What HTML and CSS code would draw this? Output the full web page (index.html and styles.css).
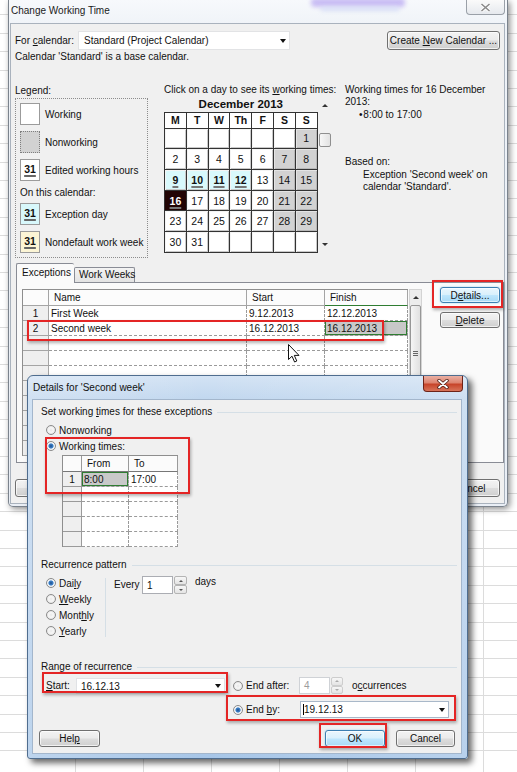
FILE: index.html
```html
<!DOCTYPE html>
<html>
<head>
<meta charset="utf-8">
<title>Change Working Time</title>
<link rel="stylesheet" href="styles.css">
</head>
<body>
<div class="desk">

  <div class="win main">
    <div class="blob b1"></div>
    <div class="blob b2"></div>
    <div class="tbar">
      <span class="ttl">Change Working Time</span>
      <div class="xb xb-in">
        <svg width="11" height="9" viewBox="0 0 11 9"><path d="M1.5 1 L9.5 8 M9.5 1 L1.5 8" stroke="#fff" stroke-width="3.2"/><path d="M1.5 1 L9.5 8 M9.5 1 L1.5 8" stroke="#8a8a8a" stroke-width="1.6"/></svg>
      </div>
    </div>
    <div class="client mc">
      <div class="row1">
        <span class="lbl1">For <u>c</u>alendar:</span>
        <div class="dd dd-cal"><span>Standard (Project Calendar)</span><i class="tri"></i></div>
        <div class="btn b-new"><span>Create <u>N</u>ew Calendar ...</span></div>
      </div>
      <div class="note">Calendar 'Standard' is a base calendar.</div>

      <div class="cols">
        <div class="lgc">
          <div class="cap">Legend:</div>
          <div class="lgbox">
            <div class="li"><span class="sw sw-w"></span><span>Working</span></div>
            <div class="li"><span class="sw sw-n"></span><span>Nonworking</span></div>
            <div class="li"><span class="sw sw-e"><b>31</b></span><span>Edited working hours</span></div>
            <div class="oncal">On this calendar:</div>
            <div class="li"><span class="sw sw-x"><b>31</b></span><span>Exception day</span></div>
            <div class="li"><span class="sw sw-d"><b>31</b></span><span>Nondefault work week</span></div>
          </div>
        </div>

        <div class="calc">
          <div class="cap2">Click on a day to see its <u>w</u>orking times:</div>
          <div class="calbody">
            <div class="calmain">
              <div class="month">December 2013</div>
              <div class="cal">
                <div class="h">M</div><div class="h">T</div><div class="h">W</div><div class="h">Th</div><div class="h">F</div><div class="h">S</div><div class="h">S</div>
                <div></div><div></div><div></div><div></div><div></div><div></div><div class="g">1</div>
                <div>2</div><div>3</div><div>4</div><div>5</div><div>6</div><div class="g">7</div><div class="g">8</div>
                <div class="x"><span>9</span></div><div class="x"><span>10</span></div><div class="x"><span>11</span></div><div class="x"><span>12</span></div><div>13</div><div class="g">14</div><div class="g">15</div>
                <div class="s"><span>16</span></div><div>17</div><div>18</div><div>19</div><div>20</div><div class="g">21</div><div class="g">22</div>
                <div>23</div><div>24</div><div>25</div><div>26</div><div>27</div><div class="g">28</div><div class="g">29</div>
                <div>30</div><div>31</div><div></div><div></div><div></div><div></div><div></div>
              </div>
            </div>
            <div class="csb"><i class="up"></i><div class="cthumb"></div><i class="dn"></i></div>
          </div>
        </div>

        <div class="info">
          <div>Working times for 16 December</div>
          <div>2013:</div>
          <div class="i3">&#8226;&#8202;8:00 to 17:00</div>
          <div class="i4">Based on:</div>
          <div class="i5">Exception 'Second week' on</div>
          <div class="i6">calendar 'Standard'.</div>
        </div>
      </div>

      <div class="tabs">
        <div class="tab act">Exceptions</div>
        <div class="tab">Work Weeks</div>
      </div>
      <div class="panel">
        <div class="xtw">
          <div class="xt">
            <div class="hc rh0"></div><div class="hc">Name</div><div class="hc">Start</div><div class="hc hg">Finish</div>
            <div class="rh">1</div><div class="bc">First Week</div><div class="bc">9.12.2013</div><div class="bc">12.12.2013</div>
            <div class="rh">2</div><div class="bc">Second week</div><div class="bc">16.12.2013</div><div class="bc fsel">16.12.2013</div>
            <div class="rh"></div><div class="bc"></div><div class="bc"></div><div class="bc"></div>
            <div class="rh"></div><div class="bc"></div><div class="bc"></div><div class="bc"></div>
            <div class="rh"></div><div class="bc"></div><div class="bc"></div><div class="bc"></div>
            <div class="rh"></div><div class="bc"></div><div class="bc"></div><div class="bc"></div>
            <div class="rh"></div><div class="bc"></div><div class="bc"></div><div class="bc"></div>
            <div class="rh"></div><div class="bc"></div><div class="bc"></div><div class="bc"></div>
            <div class="rh"></div><div class="bc"></div><div class="bc"></div><div class="bc"></div>
            <div class="rh"></div><div class="bc"></div><div class="bc"></div><div class="bc"></div>
          </div>
          <div class="vsb">
            <div class="vup"><i class="up"></i></div>
            <div class="vthumb"><span class="grip"></span><span class="grip"></span><span class="grip"></span></div>
          </div>
        </div>
        <div class="sbtn">
          <div class="btn def b-det"><span>D<u>e</u>tails...</span></div>
          <div class="btn b-del"><span><u>D</u>elete</span></div>
        </div>
      </div>
      <div class="bbtns">
        <div class="btn b-h1"><span>Help</span></div>
        <div class="btn b-ok1"><span>OK</span></div>
        <div class="btn b-c1"><span>Cancel</span></div>
      </div>
    </div>
  </div>

  <div class="ann r1"></div>
  <div class="ann r2"></div>

  <svg class="cursor" width="13" height="19" viewBox="0 0 13 19"><path d="M0.5 0.5 L0.5 15.5 L4 12.2 L6.6 18 L8.8 17 L6.3 11.4 L11 11.4 Z" fill="#fff" stroke="#111" stroke-width="1" stroke-linejoin="round"/></svg>

  <div class="win det">
    <div class="dtbar">
      <span class="dttl">Details for 'Second week'</span>
      <div class="xb xb-red">
        <svg width="12" height="10" viewBox="0 0 12 10"><path d="M2 1.5 L10 8.5 M10 1.5 L2 8.5" stroke="#4a1a12" stroke-width="3.4" stroke-linecap="round"/><path d="M2 1.5 L10 8.5 M10 1.5 L2 8.5" stroke="#fff" stroke-width="1.8" stroke-linecap="round"/></svg>
      </div>
    </div>
    <div class="client dc">
      <div class="gh g1"><span>Set working <u>t</u>imes for these exceptions</span></div>
      <div class="rr r-non"><span class="radio"></span><span>Nonworking</span></div>
      <div class="rr r-wt"><span class="radio on"></span><span>Working times:</span></div>
      <div class="wt">
        <div class="whc"></div><div class="whc">From</div><div class="whc">To</div>
        <div class="wrh">1</div><div class="wbc wsel">8:00</div><div class="wbc">17:00</div>
        <div class="wrh"></div><div class="wbc"></div><div class="wbc"></div>
        <div class="wrh"></div><div class="wbc"></div><div class="wbc"></div>
        <div class="wrh"></div><div class="wbc"></div><div class="wbc"></div>
        <div class="wrh"></div><div class="wbc"></div><div class="wbc"></div>
      </div>

      <div class="gh g2"><span>Recurrence pattern</span></div>
      <div class="rec">
        <div class="recl">
          <div class="rr rr16"><span class="radio on"></span><span>Dai<u>l</u>y</span></div>
          <div class="rr rr16"><span class="radio"></span><span><u>W</u>eekly</span></div>
          <div class="rr rr16"><span class="radio"></span><span>Mont<u>h</u>ly</span></div>
          <div class="rr rr16"><span class="radio"></span><span><u>Y</u>early</span></div>
        </div>
        <div class="vsep"></div>
        <div class="recr">
          <span class="every">Every</span>
          <div class="inp inp1">1</div>
          <div class="spin"><span class="sp"><i class="up sm"></i></span><span class="sp"><i class="dn sm"></i></span></div>
          <span class="days">days</span>
        </div>
      </div>

      <div class="gh g3"><span>Range of recurrence</span></div>
      <div class="rg1">
        <span class="lstart"><u>S</u>tart:</span>
        <div class="dd dd-st"><span>16.12.13</span><i class="tri"></i></div>
        <span class="radio rad2"></span>
        <span class="lea">End after:</span>
        <div class="inp inp2">4</div>
        <div class="spin spin2"><span class="sp"><i class="up sm gr"></i></span><span class="sp"><i class="dn sm gr"></i></span></div>
        <span class="occ">o<u>c</u>currences</span>
      </div>
      <div class="rg2">
        <span class="radio on rad2"></span>
        <span class="leb">End <u>b</u>y:</span>
        <div class="dd dd-eb"><span class="caret"></span><span>19.12.13</span><i class="tri"></i></div>
      </div>
      <div class="dbtns">
        <div class="btn b-help"><span>Hel<u>p</u></span></div>
        <div class="btn def b-ok"><span>OK</span></div>
        <div class="btn b-cancel"><span>Cancel</span></div>
      </div>
    </div>
  </div>

  <div class="ann r3"></div>
  <div class="ann r4"></div>
  <div class="ann r5"></div>
  <div class="ann r6"></div>
</div>
</body>
</html>
```

FILE: styles.css
```css
* { box-sizing: border-box; }
html, body { margin: 0; padding: 0; }
body {
  font-family: "Liberation Sans", Arial, sans-serif;
  font-size: 10px;
  color: #111;
  background: #fff;
}
u { text-decoration: underline; text-underline-offset: 1px; }

.desk {
  position: relative;
  width: 517px;
  height: 772px;
  overflow: hidden;
  background-color: #fff;
  background-image:
    repeating-linear-gradient(to bottom, transparent 0, transparent 17.4px, #dcdcdc 17.4px, #dcdcdc 18.4px),
    repeating-linear-gradient(to right, transparent 0, transparent 67px, #dcdcdc 67px, #dcdcdc 68px);
  background-position: 0 -3px, 8px 0;
}

/* ---------- windows ---------- */
.win { position: absolute; display: flex; flex-direction: column; }

.main {
  left: 8px; top: 0;
  width: 500px; height: 507px;
  background: linear-gradient(#f7f9fc, #eef2f7 30px, #e9eef5);
  border: 1px solid #7b838d;
  border-top: none;
  border-radius: 0 0 5px 5px;
  padding: 0 2px 2px 1px;
  box-shadow: 2px 2px 6px rgba(0,0,0,.45);
  z-index: 1;
}
.blob { position: absolute; filter: blur(2px); }
.b1 { left: 302px; top: -2px; width: 94px; height: 9px; background: #c9bdf4; border-radius: 4px; }
.b2 { left: 312px; top: 7px; width: 78px; height: 4px; background: #d6def6; }

.tbar { height: 23px; display: flex; align-items: flex-start; position: relative; }
.ttl { line-height: 22px; padding-left: 1px; color: #1a1a1a; }
.xb { display: flex; align-items: center; justify-content: center; margin-left: auto; }
.xb-in {
  width: 39px; height: 15px;
  border: 1px solid #9aa0a8; border-top: none;
  border-radius: 0 0 4px 4px;
  background: linear-gradient(#fafafa, #e6e9ee);
  margin-right: 0;
}

.client { flex: 1; background: #f0f0f0; display: flex; flex-direction: column; }
.mc { border: 1px solid #a9b2bd; padding: 0 4px; }

.row1 { display: flex; align-items: center; height: 19px; margin-top: 7px; }
.lbl1 { width: 63px; white-space: nowrap; }
.dd {
  background: #fff;
  border: 1px solid #c9ccd1;
  display: flex; align-items: center;
  padding-left: 5px;
  white-space: nowrap;
}
.dd-cal { width: 212px; height: 19px; border-color: #e2e3e5; }
.tri {
  margin-left: auto; margin-right: 3px;
  width: 0; height: 0;
  border-left: 3.5px solid transparent;
  border-right: 3.5px solid transparent;
  border-top: 4px solid #111;
}

.btn {
  border: 1px solid #707070;
  border-radius: 3px;
  background: linear-gradient(#f3f3f3 0, #ebebeb 48%, #dddddd 52%, #cfcfcf 100%);
  box-shadow: inset 0 0 0 1px rgba(255,255,255,.7);
  display: flex; align-items: center; justify-content: center;
  white-space: nowrap;
  color: #111;
}
.btn.def {
  border-color: #3c7fb1;
  background: linear-gradient(#eaf6fd 0, #d9f0fc 48%, #bee6fd 52%, #a7d9f5 100%);
  box-shadow: inset 0 0 0 1px rgba(255,255,255,.6), 0 0 2px #8ecdf0;
}
.b-new { margin-left: auto; width: 113px; height: 19px; }

.note { margin-top: 1px; line-height: 12px; }

.cols { display: flex; margin-top: 21px; }

/* legend */
.lgc { width: 133px; flex: none; }
.cap { line-height: 14px; height: 14px; }
.lgbox {
  height: 160px;
  border: 1px dotted #8c8c8c;
  padding: 4px 0 0 4px;
}
.li { display: flex; align-items: center; height: 22px; margin-bottom: 6px; white-space: nowrap; }
.sw {
  width: 20px; height: 22px; flex: none;
  margin-right: 5px;
  border: 1px solid #9b9b9b;
  background: #fff;
  display: flex; align-items: center; justify-content: center;
}
.sw b {
  font-size: 10.5px;
  text-decoration: underline;
  text-decoration-thickness: 2px;
  text-decoration-color: #666;
  text-underline-offset: 2px;
  margin-top: -2px;
}
.sw-n { background: #d2d2d2; border: 1px dotted #7e7e7e; }
.sw-x { background: #d8f8fb; }
.sw-d { background: #fcf5d5; }
.oncal { line-height: 14px; margin: -1px 0 3px 0; }

/* calendar */
.calc { margin-left: 16px; width: 166px; flex: none; }
.cap2 { line-height: 12px; height: 12px; white-space: nowrap; }
.calbody { display: flex; }
.month { height: 16px; line-height: 16px; text-align: center; font-weight: bold; font-size: 11.5px; }
.cal {
  display: grid;
  grid-template-columns: repeat(7, 20.8px);
  grid-template-rows: 14.6px repeat(6, 19.7px);
  gap: 1px;
  background: #333;
  border: 1px solid #333;
  width: max-content;
}
.cal > div {
  background: #fff;
  display: flex; align-items: center; justify-content: center;
  font-size: 10.5px;
  box-shadow: inset 1px 1px 0 #f4f4f4, inset -1px -1px 0 #c9c9c9;
}
.cal .h { font-weight: bold; box-shadow: none; }
.cal .g { background: #d2d2d2; box-shadow: inset 1px 1px 0 #e4e4e4, inset -1px -1px 0 #b7b7b7; }
.cal .x { background: #d9f9fc; font-weight: bold; }
.cal .s { background: #220404; color: #fff; font-weight: bold; box-shadow: none; }
.cal .x span, .cal .s span {
  text-decoration: underline;
  text-decoration-thickness: 2px;
  text-decoration-color: #777;
  text-underline-offset: 2px;
}
.csb {
  width: 12px; height: 154px;
  margin-top: 2px; margin-left: 1px;
  display: flex; flex-direction: column; align-items: center;
}
.up, .dn { display: block; width: 0; height: 0; }
.up { border-left: 3px solid transparent; border-right: 3px solid transparent; border-bottom: 3px solid #333; }
.dn { border-left: 3px solid transparent; border-right: 3px solid transparent; border-top: 3px solid #333; }
.csb .up { margin-top: 6px; }
.cthumb {
  margin-top: 26px;
  width: 12px; height: 14px;
  border: 1px solid #8f8f8f;
  border-radius: 2px;
  background: linear-gradient(to right, #f7f7f7, #e2e2e2);
}
.csb .dn { margin-top: auto; margin-bottom: 6px; }

/* info */
.info { margin-left: 15px; line-height: 12px; white-space: nowrap; }
.i3 { margin-top: 1px; padding-left: 14px; }
.i4 { margin-top: 35px; }
.i5 { margin-top: 1px; padding-left: 18px; }
.i6 { padding-left: 18px; }

/* tabs */
.tabs { display: flex; align-items: flex-end; margin-top: 5px; margin-left: 1px; height: 19px; position: relative; z-index: 1; }
.tab {
  height: 15px; width: 61px;
  border: 1px solid #898c95; border-bottom: none;
  border-radius: 2px 2px 0 0;
  padding-left: 4px;
  line-height: 14px;
  background: linear-gradient(#f3f3f3, #e3e3e3);
  white-space: nowrap;
}
.tab.act {
  height: 20px; width: 58px;
  margin-bottom: -1px;
  padding-left: 5px;
  line-height: 18px;
  background: #fafafa;
  border-right: none;
}
.panel {
  margin-left: 1px;
  width: 488px; height: 181px;
  border: 1px solid #898c95;
  background: #fafafa;
  display: flex; align-items: flex-start;
}
.xtw { display: flex; margin: 6px 0 0 5px; }
.xt {
  display: grid;
  grid-template-columns: 26px 198px 78px 83px;
  grid-template-rows: 16px;
  grid-auto-rows: 15px;
  border-top: 1px solid #8e8e8e;
  border-left: 1px solid #8e8e8e;
  background: #fff;
}
.xt > div { white-space: nowrap; overflow: hidden; display: flex; align-items: center; }
.hc { background: #fcfcfc; border-right: 1px solid #a5a5a5; border-bottom: 1px solid #a5a5a5; padding-left: 5px; }
.hc.hg { border-bottom: 1px solid #2f7d32; }
.rh { background: #efefef; border-right: 1px solid #a5a5a5; border-bottom: 1px solid #a5a5a5; justify-content: center; }
.bc { border-right: 1px dashed #9a9a9a; border-bottom: 1px dashed #9a9a9a; padding-left: 2px; }
.bc.fsel { background: #c8c8c8; box-shadow: inset 0 0 0 1px #2f7d32; }
.vsb {
  width: 13px; height: 167px;
  margin-left: 1px;
  background: #ececec;
  border: 1px solid #d3d3d3;
  display: flex; flex-direction: column; align-items: center;
}
.vup { height: 15px; display: flex; align-items: center; justify-content: center; }
.vthumb {
  width: 11px; height: 96px;
  border: 1px solid #979797;
  border-radius: 2px;
  background: linear-gradient(to right, #f5f5f5, #e0e0e0);
  display: flex; flex-direction: column; align-items: center; justify-content: center; gap: 1px;
}
.grip { display: block; width: 5px; height: 1px; background: #666; }
.sbtn { margin-left: 18px; margin-top: 4px; display: flex; flex-direction: column; gap: 9px; }
.b-det, .b-del { width: 60px; height: 16px; }

.bbtns { display: flex; margin-top: 16px; height: 18px; }
.b-h1 { width: 60px; }
.b-ok1 { width: 60px; margin-left: auto; }
.b-c1 { width: 60px; margin-left: 12px; }

/* ---------- details dialog ---------- */
.det {
  left: 27px; top: 375px;
  width: 441px; height: 384px;
  border: 1px solid #4f6d8f;
  border-radius: 6px 6px 3px 3px;
  background: linear-gradient(to right, rgba(255,255,255,.25), rgba(255,255,255,0) 40%, rgba(255,255,255,.2)), linear-gradient(#d3e3f4, #c2d8ef 22px, #b2cdeb 60%, #a7c6e8);
  padding: 0 5px 4px 4px;
  box-shadow: 4px 4px 6px rgba(0,0,0,.6);
  z-index: 3;
}
.dtbar { height: 23px; display: flex; align-items: flex-start; }
.dttl { line-height: 23px; padding-left: 1px; color: #111; }
.xb-red {
  width: 40px; height: 16px;
  margin-right: -1px;
  border: 1px solid #6d2318; border-top: none;
  border-radius: 0 0 4px 4px;
  background: linear-gradient(#eab0a3 0, #dd8470 45%, #c7442a 55%, #d8745a 100%);
}
.dc { border: 1px solid #a3b6cc; padding: 0 4px 0 8px; }

.gh { display: flex; align-items: center; line-height: 12px; height: 12px; white-space: nowrap; }
.gh::after { content: ""; flex: 1; height: 1px; background: #d5dfe6; margin-left: 5px; }
.g1 { margin-top: 6px; }
.g2 { margin-top: 12px; }
.g3 { margin-top: 22px; }

.rr { display: flex; align-items: center; height: 14px; padding-left: 5px; white-space: nowrap; }
.r-non { margin-top: 5px; }
.r-wt { margin-top: 2px; }
.rr16 { height: 16px; }
.radio {
  display: block; flex: none;
  width: 10px; height: 10px;
  margin-right: 3px;
  border-radius: 50%;
  border: 1px solid #8b8b8b;
  background: radial-gradient(circle at 50% 50%, #e8e8e8 0, #f7f7f7 40%, #d6d6d6 100%);
}
.radio.on { background: radial-gradient(circle at 50% 50%, #1d4d8c 0, #3f86cf 2.2px, #e3eaf2 2.9px, #f4f6f8 60%, #d3d8de 100%); }

.wt {
  display: grid;
  grid-template-columns: 19px 47px 49px;
  grid-template-rows: 16px repeat(5, 15px);
  margin: 2px 0 0 21px;
  width: max-content;
  border-top: 1px solid #8e8e8e;
  border-left: 1px solid #8e8e8e;
  background: #fff;
}
.wt > div { display: flex; align-items: center; white-space: nowrap; }
.whc { background: #fbfbfb; border-right: 1px solid #9a9a9a; border-bottom: 1px solid #777; padding-left: 5px; }
.wrh { background: #efefef; border-right: 1px solid #9a9a9a; border-bottom: 1px solid #9a9a9a; justify-content: center; }
.wbc { border-right: 1px dashed #9a9a9a; border-bottom: 1px dashed #9a9a9a; padding-left: 2px; }
.wbc.wsel { background: #c9c9c9; box-shadow: inset 0 0 0 1px #2f7d32; }

.rec { display: flex; margin-top: 4px; height: 64px; }
.recl { width: 64px; }
.vsep { width: 1px; background: #d5dfe6; margin: 3px 0 2px 0; }
.recr { padding-left: 8px; display: flex; align-items: flex-start; }
.every { width: 28px; line-height: 18px; margin-top: 1px; }
.inp {
  background: #fff;
  border: 1px solid #abadb3;
  padding-left: 4px;
  display: flex; align-items: center;
}
.inp1 { width: 31px; height: 18px; margin-top: 1px; }
.spin { width: 13px; height: 18px; margin-top: 1px; margin-left: 1px; display: flex; flex-direction: column; }
.sp {
  flex: 1;
  border: 1px solid #b4b4b4;
  border-radius: 2px;
  background: linear-gradient(#f7f7f7, #e4e4e4);
  display: flex; align-items: center; justify-content: center;
}
.sm.up { border-left-width: 2.5px; border-right-width: 2.5px; border-bottom: 2.5px solid #555; }
.sm.dn { border-left-width: 2.5px; border-right-width: 2.5px; border-top: 2.5px solid #555; }
.sm.gr.up { border-bottom-color: #aaa; }
.sm.gr.dn { border-top-color: #aaa; }
.days { margin-left: 8px; line-height: 12px; margin-top: 1px; }

.rg1 { display: flex; align-items: flex-start; margin-top: 4px; height: 17px; white-space: nowrap; }
.lstart { width: 35px; padding-left: 5px; line-height: 17px; }
.dd-st { width: 149px; height: 16px; margin-top: 1px; padding-left: 4px; border-color: #e0e2e5; }
.rad2 { margin-top: 4px; margin-right: 0; }
.rg1 .rad2 { margin-left: 8px; }
.lea { width: 56px; padding-left: 3px; line-height: 17px; }
.inp2 { width: 31px; height: 17px; color: #9c9c9c; border-color: #cfd2d6; }
.spin2 { width: 12px; height: 17px; margin-top: 0; }
.spin2 .sp { border-color: #cdcdcd; }
.occ { margin-left: 9px; line-height: 17px; }

.rg2 { display: flex; align-items: flex-start; margin-top: 7px; height: 17px; padding-left: 192px; white-space: nowrap; }
.leb { width: 57px; padding-left: 3px; line-height: 17px; }
.dd-eb { width: 149px; height: 17px; padding-left: 2px; border-color: #a9b8c9; }
.caret { display: block; width: 1px; height: 11px; background: #000; margin-right: 0; }

.dbtns { display: flex; margin-top: 12px; height: 17px; }
.b-help { width: 61px; margin-left: -2px; }
.b-ok { width: 60px; margin-left: auto; }
.b-cancel { width: 59px; margin-left: 11px; margin-right: 2px; }

/* ---------- annotations ---------- */
.ann {
  position: absolute;
  border: 2px solid #e42525;
  box-shadow: 1px 2px 3px rgba(0,0,0,.3);
  z-index: 2;
}
.r1 { left: 432px; top: 280px; width: 71px; height: 28px; }
.r2 { left: 27px; top: 320px; width: 357px; height: 21px; }
.r3 { left: 45px; top: 437px; width: 145px; height: 57px; z-index: 4; }
.r4 { left: 42px; top: 672px; width: 186px; height: 21px; z-index: 4; }
.r5 { left: 226px; top: 695px; width: 230px; height: 26px; z-index: 4; }
.r6 { left: 319px; top: 723px; width: 68px; height: 25px; z-index: 4; }

.cursor { position: absolute; left: 288px; top: 344px; z-index: 2; }
```
